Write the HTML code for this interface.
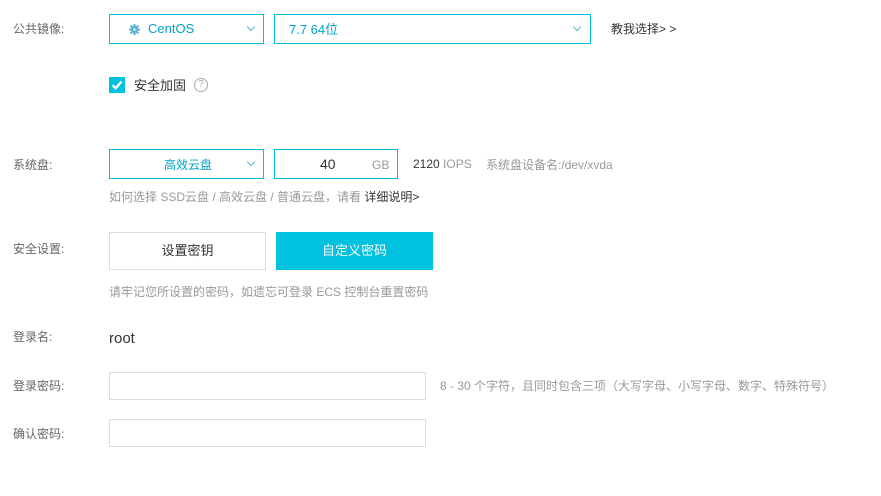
<!DOCTYPE html>
<html><head><meta charset="utf-8"><style>
*{margin:0;padding:0;box-sizing:border-box}
body{width:881px;height:496px;background:#fff;font-family:"Liberation Sans","Noto Sans CJK SC",sans-serif;font-size:12px;color:#333;position:relative;overflow:hidden}
.a{position:absolute;white-space:nowrap}
.lbl{color:#666;font-size:12px}
.box{position:absolute;border:1px solid #00c1de;background:#fff}
.gray{color:#999}
.chev{position:absolute;width:6px;height:6px;border-right:1px solid #5bb8cc;border-bottom:1px solid #5bb8cc;transform:rotate(45deg)}
.inp{position:absolute;border:1px solid #ddd;background:#fff}
</style></head><body>
<div class="a lbl" style="left:13px;top:20px">公共镜像:</div>
<div class="box" style="left:109px;top:14px;width:155px;height:30px">
 <svg class="a" style="left:19px;top:9px" width="11" height="11" viewBox="0 0 11 11"><circle cx="5.5" cy="5.5" r="3.5" fill="#4fb5d0"/><g stroke="#4fb5d0" stroke-width="2"><line x1="5.5" y1="0" x2="5.5" y2="11"/><line x1="0" y1="5.5" x2="11" y2="5.5"/><line x1="1.6" y1="1.6" x2="9.4" y2="9.4"/><line x1="9.4" y1="1.6" x2="1.6" y2="9.4"/></g><circle cx="5.5" cy="5.5" r="1.3" fill="#fff"/></svg>
 <div class="a" style="left:38px;top:6px;color:#00a3c9;font-size:13px">CentOS</div>
 <div class="chev" style="left:138px;top:9px"></div>
</div>
<div class="box" style="left:274px;top:14px;width:317px;height:30px">
 <div class="a" style="left:14px;top:4px;color:#00a3c9;font-size:13px">7.7 64位</div>
 <div class="chev" style="left:299px;top:9px"></div>
</div>
<div class="a" style="left:611px;top:20px;color:#333">教我选择&gt; &gt;</div>
<div class="a" style="left:109px;top:77px;width:16px;height:16px;background:#00c1de">
 <svg width="16" height="16"><path d="M3.5 8.2 L6.8 11.2 L12.5 4.5" stroke="#fff" stroke-width="2.4" fill="none"/></svg>
</div>
<div class="a" style="left:134px;top:75px;font-size:13px;color:#333">安全加固</div>
<div class="a" style="left:194px;top:78px;width:14px;height:14px;border:1px solid #aaa;border-radius:50%;color:#aaa;font-size:10px;text-align:center;line-height:12px">?</div>

<div class="a lbl" style="left:13px;top:156px">系统盘:</div>
<div class="box" style="left:109px;top:149px;width:155px;height:30px">
 <div class="a" style="left:54px;top:6px;color:#00a3c9;font-size:12px">高效云盘</div>
 <div class="chev" style="left:138px;top:9px"></div>
</div>
<div class="box" style="left:274px;top:149px;width:124px;height:30px">
 <div class="a" style="left:45px;top:6px;color:#333;font-size:14px">40</div>
 <div class="a" style="left:97px;top:8px;color:#999">GB</div>
</div>
<div class="a" style="left:413px;top:157px;color:#333">2120 <span class="gray">IOPS</span></div>
<div class="a gray" style="left:486px;top:156px">系统盘设备名:/dev/xvda</div>
<div class="a gray" style="left:109px;top:188px">如何选择 SSD云盘 / 高效云盘 / 普通云盘，请看 <span style="color:#333">详细说明&gt;</span></div>

<div class="a lbl" style="left:13px;top:240px">安全设置:</div>
<div class="inp" style="left:109px;top:232px;width:157px;height:38px;text-align:center;line-height:36px;font-size:13px;color:#333">设置密钥</div>
<div class="a" style="left:276px;top:232px;width:157px;height:38px;background:#00c1de;color:#fff;text-align:center;line-height:38px;font-size:13px">自定义密码</div>
<div class="a gray" style="left:109px;top:283px">请牢记您所设置的密码，如遗忘可登录 ECS 控制台重置密码</div>

<div class="a lbl" style="left:13px;top:328px">登录名:</div>
<div class="a" style="left:109px;top:330px;font-size:15px;color:#333">root</div>

<div class="a lbl" style="left:13px;top:377px">登录密码:</div>
<div class="inp" style="left:109px;top:372px;width:317px;height:28px"></div>
<div class="a gray" style="left:440px;top:377px">8 - 30 个字符，且同时包含三项（大写字母、小写字母、数字、特殊符号）</div>
<div class="a lbl" style="left:13px;top:425px">确认密码:</div>
<div class="inp" style="left:109px;top:419px;width:317px;height:28px"></div>
</body></html>
